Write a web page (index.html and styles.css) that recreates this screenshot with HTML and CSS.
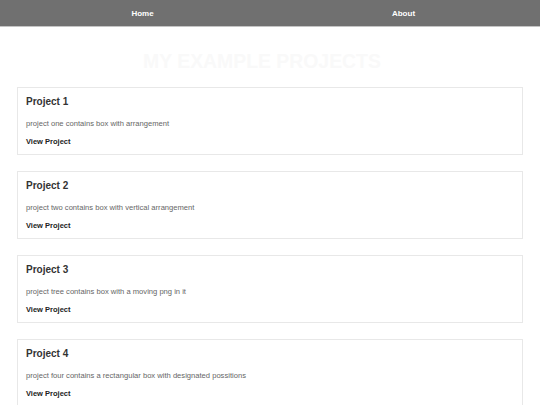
FILE: index.html
```html
<!DOCTYPE html>
<html lang="en">
<head>
    <meta charset="UTF-8" />
    <meta name="viewport" content="width=device-width, initial-scale=1.0" />
    <title>My Example Projects</title>
    <link rel="stylesheet" href="styles.css">
</head>
<body>
    <!-- Navigation -->
    <nav class="navbar">
        <a href="#" class="nav-link">Home</a>
        <a href="#" class="nav-link">About</a>
    </nav>

    <h1 class="page-title">MY EXAMPLE PROJECTS</h1>

    <!-- Project list -->
    <div class="projects">
        <div class="project-card">
            <h2>Project 1</h2>
            <p>project one contains box with arrangement</p>
            <a href="#" class="view-link">View Project</a>
        </div>

        <div class="project-card">
            <h2>Project 2</h2>
            <p>project two contains box with vertical arrangement</p>
            <a href="#" class="view-link">View Project</a>
        </div>

        <div class="project-card">
            <h2>Project 3</h2>
            <p>project tree contains box with a moving png in it</p>
            <a href="#" class="view-link">View Project</a>
        </div>

        <div class="project-card">
            <h2>Project 4</h2>
            <p>project four contains a rectangular box with designated possitions</p>
            <a href="#" class="view-link">View Project</a>
        </div>
    </div>
</body>
</html>
```

FILE: styles.css
```css
* {
    margin: 0;
    padding: 0;
    box-sizing: border-box;
}

body {
    font-family: 'Liberation Sans', Arial, Helvetica, sans-serif;
    background: #fff;
    color: #333;
}

.navbar {
    display: flex;
    height: 27px;
    padding: 0 6px 0 12px;
    background: #707070;
    border-bottom: 1px solid #c4c4c4;
}

.nav-link {
    flex: 1;
    display: flex;
    align-items: center;
    justify-content: center;
    color: #fff;
    font-size: 8px;
    font-weight: bold;
    text-decoration: none;
}

.page-title {
    margin: 23px 0 14px;
    padding-right: 16px;
    text-align: center;
    font-size: 19.4px;
    line-height: 23px;
    font-weight: bold;
    color: #f9f9f9;
}

.projects {
    padding: 0 17px;
}

.project-card {
    margin-bottom: 16px;
    padding: 8px 8px;
    border: 1px solid #e8e8e8;
    background: #fff;
}

.project-card h2 {
    margin-bottom: 11px;
    font-size: 10px;
    line-height: 12px;
    font-weight: bold;
    color: #333;
}

.project-card p {
    margin-bottom: 9px;
    font-size: 7.6px;
    line-height: 9px;
    color: #666;
}

.view-link {
    display: block;
    font-size: 7.5px;
    line-height: 9px;
    font-weight: bold;
    color: #222;
    text-decoration: none;
}
```
